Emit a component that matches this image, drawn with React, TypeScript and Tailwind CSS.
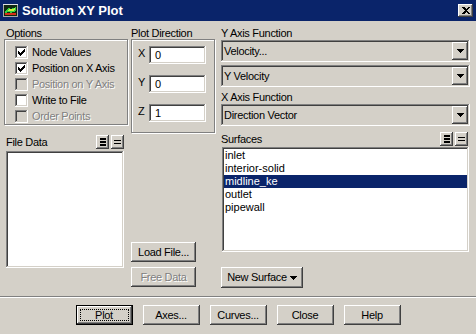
import React from "react";

const raised =
  "shadow-[inset_-1px_-1px_#404040,inset_1px_1px_#ffffff,inset_-2px_-2px_#808080,inset_2px_2px_#d4d0c8]";
const sunken =
  "shadow-[inset_-1px_-1px_#ffffff,inset_1px_1px_#808080,inset_-2px_-2px_#d4d0c8,inset_2px_2px_#404040]";
const etched = "border border-[#808080] shadow-[inset_1px_1px_#ffffff,1px_1px_#ffffff]";
const disabledText = "text-[#808080] [text-shadow:1px_1px_0_#ffffff]";

function CheckMark() {
  return (
    <svg width="13" height="13" viewBox="0 0 13 13" shapeRendering="crispEdges">
      <rect x="9" y="3" width="1" height="1" fill="#000" />
      <rect x="8" y="4" width="2" height="1" fill="#000" />
      <rect x="3" y="5" width="1" height="1" fill="#000" />
      <rect x="7" y="5" width="3" height="1" fill="#000" />
      <rect x="3" y="6" width="2" height="1" fill="#000" />
      <rect x="6" y="6" width="3" height="1" fill="#000" />
      <rect x="3" y="7" width="5" height="1" fill="#000" />
      <rect x="4" y="8" width="3" height="1" fill="#000" />
      <rect x="5" y="9" width="1" height="1" fill="#000" />
    </svg>
  );
}

function Check({ checked, disabled, label }: { checked?: boolean; disabled?: boolean; label: string }) {
  return (
    <div className="h-[16px] flex items-center gap-[4px]">
      <div className={`w-[13px] h-[13px] shrink-0 ${disabled ? "bg-[#d4d0c8]" : "bg-white"} ${sunken}`}>
        {checked && <CheckMark />}
      </div>
      <span className={`tracking-[-0.3px] leading-[13px] ${disabled ? disabledText : ""}`}>{label}</span>
    </div>
  );
}

function DownTri() {
  return (
    <svg width="7" height="4" viewBox="0 0 7 4" shapeRendering="crispEdges">
      <rect x="0" y="0" width="7" height="1" fill="#000" />
      <rect x="1" y="1" width="5" height="1" fill="#000" />
      <rect x="2" y="2" width="3" height="1" fill="#000" />
      <rect x="3" y="3" width="1" height="1" fill="#000" />
    </svg>
  );
}

function Dropdown({ value }: { value: string }) {
  return (
    <div className={`h-[22px] ${sunken} bg-[#d4d0c8] flex items-center p-[2px]`}>
      <span className="flex-1 pl-[1px] tracking-[-0.3px] leading-[13px]">{value}</span>
      <div className={`w-[16px] h-[18px] ${raised} flex items-center justify-center`}>
        <DownTri />
      </div>
    </div>
  );
}

function SelBtn({ kind }: { kind: "all" | "none" }) {
  return (
    <div className={`w-[13px] h-[14px] ${raised} flex items-center justify-center`}>
      {kind === "all" ? (
        <svg width="6" height="8" viewBox="0 0 6 8" shapeRendering="crispEdges">
          <rect x="0" y="0" width="6" height="2" fill="#000" />
          <rect x="0" y="3" width="6" height="2" fill="#000" />
          <rect x="0" y="6" width="6" height="2" fill="#000" />
        </svg>
      ) : (
        <svg width="7" height="4" viewBox="0 0 7 4" shapeRendering="crispEdges">
          <rect x="0" y="0" width="7" height="1" fill="#000" />
          <rect x="0" y="3" width="7" height="1" fill="#000" />
        </svg>
      )}
    </div>
  );
}

function Btn({
  children,
  w,
  disabled,
  className = "",
}: {
  children: React.ReactNode;
  w: string;
  disabled?: boolean;
  className?: string;
}) {
  return (
    <div
      className={`${w} h-[20px] ${raised} flex items-center justify-center tracking-[-0.3px] leading-[13px] ${
        disabled ? disabledText : ""
      } ${className}`}
    >
      {children}
    </div>
  );
}

function DirRow({ axis, value }: { axis: string; value: string }) {
  return (
    <div className="h-[18px] flex items-center">
      <span className="w-[11px] leading-[13px] -mt-[3px]">{axis}</span>
      <div className={`w-[57px] h-[18px] bg-white ${sunken} flex items-center pl-[6px] leading-[13px]`}>{value}</div>
    </div>
  );
}

export default function App() {
  const surfaces = ["inlet", "interior-solid", "midline_ke", "outlet", "pipewall"];
  return (
    <div className="w-[476px] h-[334px] bg-[#d4d0c8] overflow-hidden text-[11px] text-black font-['Liberation_Sans',Arial,sans-serif] select-none">
      {/* Title bar */}
      <div className="h-[21px] bg-[#0a246a] flex items-center pl-[3px] pr-[3px]">
        <svg width="15" height="13" viewBox="0 0 15 13" shapeRendering="crispEdges">
          <rect x="0" y="0" width="15" height="13" fill="#a8a8a8" />
          <rect x="0" y="0" width="15" height="1" fill="#e0e0e0" />
          <rect x="1" y="1" width="13" height="11" fill="#102810" />
          <path d="M2 7 L4 5 L6 4 L8 5 L10 4 L13 3 L13 7 L10 8 L8 9 L5 8 L2 9 Z" fill="#30d040" />
          <path d="M4 6 L7 5 L10 5 L12 4 L12 6 L9 7 L5 7 Z" fill="#c8f040" />
          <rect x="2" y="9" width="11" height="2" fill="#d83018" />
        </svg>
        <span className="ml-[4px] text-white font-bold text-[13px] leading-[16px]">Solution XY Plot</span>
        <div className={`ml-auto w-[15px] h-[13px] bg-[#d4d0c8] ${raised} flex items-center justify-center`}>
          <svg width="8" height="7" viewBox="0 0 8 7" shapeRendering="crispEdges">
            <path d="M0 0h2l2 2 2-2h2L5 3.5 8 7H6L4 5 2 7H0l3-3.5z" fill="#000" />
          </svg>
        </div>
      </div>

      {/* Body */}
      <div className="flex items-start pl-[4px] pt-[6px]">
        {/* Column 1 */}
        <div className="w-[124px] flex flex-col">
          <div className="h-[12px] leading-[12px] pl-[2px] tracking-[-0.3px]">Options</div>
          <div className={`h-[86px] ${etched} pt-[4px] pl-[10px] flex flex-col`}>
            <Check checked label="Node Values" />
            <Check checked label="Position on X Axis" />
            <Check disabled label="Position on Y Axis" />
            <Check label="Write to File" />
            <Check disabled label="Order Points" />
          </div>
          <div className="mt-[9px] h-[15px] flex items-center pl-[2px] pr-[4px]">
            <span className="tracking-[-0.3px] leading-[12px]">File Data</span>
            <div className="ml-auto flex gap-[2px]">
              <SelBtn kind="all" />
              <SelBtn kind="none" />
            </div>
          </div>
          <div className={`mt-[2px] ml-[2px] mr-[4px] h-[117px] bg-white ${sunken}`} />
        </div>

        {/* Column 2 */}
        <div className="ml-[3px] w-[84px] flex flex-col">
          <div className="h-[12px] leading-[12px] tracking-[-0.3px]">Plot Direction</div>
          <div className={`h-[94px] ${etched} pt-[6px] pl-[6px] flex flex-col gap-[11px]`}>
            <DirRow axis="X" value="0" />
            <DirRow axis="Y" value="0" />
            <DirRow axis="Z" value="1" />
          </div>
          <Btn w="w-[65px]" className="mt-[109px]">
            Load File...
          </Btn>
          <Btn w="w-[65px]" disabled className="mt-[5px]">
            Free Data
          </Btn>
        </div>

        {/* Column 3 */}
        <div className="ml-[6px] w-[249px] flex flex-col">
          <div className="h-[12px] leading-[12px] tracking-[-0.3px]">Y Axis Function</div>
          <div className="mt-[1px]">
            <Dropdown value="Velocity..." />
          </div>
          <div className="mt-[3px]">
            <Dropdown value="Y Velocity" />
          </div>
          <div className="mt-[4px] h-[12px] leading-[12px] tracking-[-0.3px]">X Axis Function</div>
          <div className="mt-[1px]">
            <Dropdown value="Direction Vector" />
          </div>
          <div className="mt-[5px] h-[15px] flex items-center pr-[2px]">
            <span className="tracking-[-0.3px] leading-[12px]">Surfaces</span>
            <div className="ml-auto flex gap-[2px]">
              <SelBtn kind="all" />
              <SelBtn kind="none" />
            </div>
          </div>
          <div className={`mt-[1px] ml-[1px] mr-[1px] h-[105px] bg-white ${sunken} p-[2px] flex flex-col`}>
            {surfaces.map((s) => (
              <div
                key={s}
                className={`h-[13px] leading-[13px] pl-[1px] ${s === "midline_ke" ? "bg-[#0a246a] text-white" : ""}`}
              >
                {s}
              </div>
            ))}
          </div>
          <Btn w="w-[82px]" className="mt-[15px] h-[21px] gap-[3px]">
            <span>New Surface</span>
            <DownTri />
          </Btn>
        </div>
      </div>

      {/* Separator */}
      <div className="mt-[8px] h-[2px] border-t border-t-[#808080] border-b border-b-white" />

      {/* Bottom buttons */}
      <div className="mt-[7px] flex justify-center gap-[10px]">
        <div className="w-[57px] h-[20px] border border-black flex">
          <div className={`flex-1 ${raised} flex p-[3px]`}>
            <div className="flex-1 border border-dotted border-black flex items-center justify-center tracking-[-0.3px] leading-[13px]">
              Plot
            </div>
          </div>
        </div>
        <Btn w="w-[57px]">Axes...</Btn>
        <Btn w="w-[57px]">Curves...</Btn>
        <Btn w="w-[57px]">Close</Btn>
        <Btn w="w-[57px]">Help</Btn>
      </div>
    </div>
  );
}
